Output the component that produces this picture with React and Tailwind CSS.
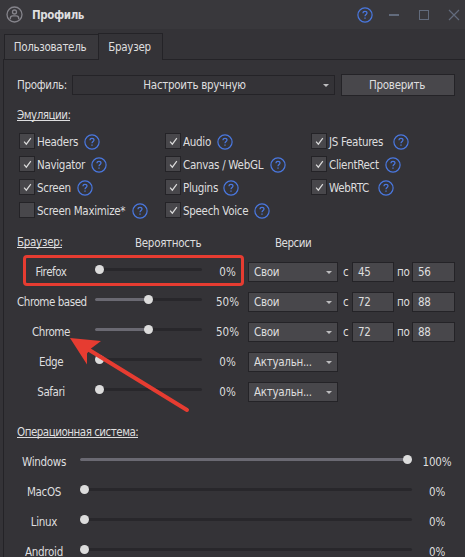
import { useState } from "react";
import clsx from "clsx";

const emulations = [
  [
    { name: "Headers", on: true, width: "w-[48px]" },
    { name: "Navigator", on: true, width: "w-[55px]" },
    { name: "Screen", on: true, width: "w-[41px]" },
    { name: "Screen Maximize*", on: false, width: "w-[96px]" },
  ],
  [
    { name: "Audio", on: true, width: "w-[35px]" },
    { name: "Canvas / WebGL", on: true, width: "w-[88px]" },
    { name: "Plugins", on: true, width: "w-[41px]" },
    { name: "Speech Voice", on: true, width: "w-[72px]" },
  ],
  [
    { name: "JS Features", on: true, width: "w-[65px]" },
    { name: "ClientRect", on: true, width: "w-[57px]" },
    { name: "WebRTC", on: true, width: "w-[50px]" },
  ],
];

const browsers = [
  { name: "Firefox", value: 0, mode: "Свои", from: 45, to: 56 },
  { name: "Chrome based", value: 50, mode: "Свои", from: 72, to: 88 },
  { name: "Chrome", value: 50, mode: "Свои", from: 72, to: 88 },
  { name: "Edge", value: 0, mode: "Актуальн..." },
  { name: "Safari", value: 0, mode: "Актуальн..." },
];

const systems = [
  { name: "Windows", value: 100 },
  { name: "MacOS", value: 0 },
  { name: "Linux", value: 0 },
  { name: "Android", value: 0 },
];

function HelpIcon() {
  return (
    <svg className="size-4 shrink-0" viewBox="0 0 16 16" fill="none" stroke="#4a78e0">
      <circle cx="8" cy="8" r="7.1" strokeWidth="1.2" />
      <path d="M6 6.2C6 4.9 6.8 4.3 8 4.3s2 .7 2 1.7c0 1.400-2 1.500-2 3.200" strokeWidth="1.200" />
      <path d="M8 10.500v1.300" strokeWidth="1.300" />
    </svg>
  );
}

function Caret() {
  return (
    <svg className="w-[6px] h-[3px] shrink-0" viewBox="0 0 6 3">
      <path d="M0 0h6L3 3z" fill="#bdbdbf" />
    </svg>
  );
}

function Check({ item }) {
  const [on, setOn] = useState(item.on);

  return (
    <div className="flex h-[23px] items-start">
      <button
        onClick={() => setOn(!on)}
        className="size-4 shrink-0 border border-[#242327] bg-[#48474b] flex items-center justify-center"
      >
        {on && (
          <svg className="w-[9px] h-[9px]" viewBox="0 0 10 10" fill="none" stroke="#dcdcdc" strokeWidth="1.300">
            <path d="M1.200 5.200L3.700 8 8.700 1.200" />
          </svg>
        )}
      </button>
      <span className={clsx("ml-[2px] mt-px h-4 leading-4", item.width)}>{item.name}</span>
      <span className="mt-px -ml-[1px]">
        <HelpIcon />
      </span>
    </div>
  );
}

function Slider({ value, className }) {
  return (
    <div className={clsx("relative h-[3px] shrink-0 rounded-full bg-[#28272b]", className)}>
      <div className="h-full rounded-full bg-[#6a6972]" style={{ width: `${value}%` }} />
      <div className="absolute inset-y-0 left-0 right-[9px]">
        <div className="absolute -top-[3px] size-[9px] rounded-full bg-[#dcdcdc]" style={{ left: `${value}%` }} />
      </div>
    </div>
  );
}

function Field({ children, className }) {
  return (
    <div className={clsx("h-5 shrink-0 flex items-center border border-[#242327] bg-[#48474b] pl-[5px]", className)}>
      {children}
    </div>
  );
}

function TitleBar() {
  return (
    <div className="h-[29px] shrink-0 flex items-center bg-[#39383c] pl-[6px]">
      <svg className="size-[17px]" viewBox="0 0 17 17" fill="none" stroke="#85848b" strokeWidth="1.300">
        <circle cx="8.500" cy="8.500" r="7.500" />
        <circle cx="8.500" cy="6" r="2" />
        <path d="M4.300 13.200v-.7c0-1.600 1-2.600 2.400-2.600h3.600c1.400 0 2.400 1 2.400 2.600v.7" />
      </svg>
      <h1 className="ml-[9px] font-bold tracking-[-0.4px]">Профиль</h1>
      <div className="ml-auto flex items-center text-[#626b7c]">
        <HelpIcon />
        <span className="ml-[16px] w-[10px] h-[2px] bg-[#626b7c]" />
        <span className="ml-5 size-[10px] border border-[#626b7c]" />
        <svg className="ml-[19px] mr-[5px] size-[12px]" viewBox="0 0 12 12" stroke="#626b7c" strokeWidth="1.200">
          <path d="M1 1l10 10M11 1L1 11" />
        </svg>
      </div>
    </div>
  );
}

function App() {
  return (
    <div className="relative w-[465px] h-[557px] overflow-hidden flex flex-col bg-[#343337] text-[11.5px] leading-4 text-[#dededf] whitespace-nowrap font-['DejaVu_Sans_Condensed','DejaVu_Sans',sans-serif] [font-stretch:condensed] tracking-[-0.3px]">
      <TitleBar />

      <div className="h-[30px] shrink-0 flex items-end pl-1">
        <div className="w-[94px] h-[25px] border border-r-0 border-b-0 border-[#242327] bg-[#39383c] flex items-center justify-center pr-[3px]">
          Пользователь
        </div>
        <div className="relative z-10 -mb-px w-[65px] h-[27px] border border-b-0 border-[#242327] bg-[#343337] flex items-center justify-center pr-[2px]">
          Браузер
        </div>
      </div>

      <div className="ml-[3px] flex-1 flex flex-col border-l border-t border-[#242327] pl-[13px]">
        <div className="mt-[14px] h-[22px] shrink-0 flex items-center">
          <span className="w-[55px]">Профиль:</span>
          <div className="w-[263px] h-5 border border-[#242327] flex items-center pr-[5px]">
            <span className="flex-1 text-center pr-[7px]">Настроить вручную</span>
            <Caret />
          </div>
          <button className="ml-[6px] w-[114px] h-[22px] border border-[#242327] bg-[#48474b] pr-[2px]">Проверить</button>
        </div>

        <h2 className="mt-[12px] h-[13px] leading-[14px] w-[53px] border-b border-[#dededf] tracking-[-0.5px]">
          Эмуляции:
        </h2>

        <div className="mt-[12px] ml-[2px] h-[92px] shrink-0 flex">
          {emulations.map((column, key) => (
            <div key={key} className="w-[146px]">
              {column.map((item) => (
                <Check key={item.name} item={item} />
              ))}
            </div>
          ))}
        </div>

        <div className="mt-[10px] h-[13px] shrink-0 flex leading-[14px]">
          <h2 className="w-[45px] h-[13px] border-b border-[#dededf]">Браузер:</h2>
          <span className="ml-[73px] w-[140px] pt-px">Вероятность</span>
          <span className="pt-px tracking-[-0.5px]">Версии</span>
        </div>

        <div className="mt-[14px] shrink-0 flex flex-col gap-[10px]">
          {browsers.map((item) => (
            <div key={item.name} className="h-5 flex items-center">
              <span className="w-[70px] pr-[2px] text-center tracking-[-0.45px]">{item.name}</span>
              <Slider value={item.value} className="ml-[8px] w-[107px] -mt-[5px]" />
              <span className="w-[46px] pl-[5px] text-center tracking-normal">{item.value}%</span>
              <Field className="w-[90px] justify-between pr-[5px]">
                {item.mode}
                <Caret />
              </Field>
              {item.from && (
                <>
                  <span className="w-[14px] pl-[5px]">с</span>
                  <Field className="w-[42px]">{item.from}</Field>
                  <span className="w-[18px] pl-[3px]">по</span>
                  <Field className="w-[43px]">{item.to}</Field>
                </>
              )}
            </div>
          ))}
        </div>

        <h2 className="mt-[23px] h-[13px] shrink-0 leading-[14px] w-[121px] border-b border-[#dededf] tracking-[-0.5px]">
          Операционная система:
        </h2>

        <div className="mt-[14px] shrink-0 flex flex-col gap-[10px] leading-[10px]">
          {systems.map((item) => (
            <div key={item.name} className="h-5 flex items-center">
              <span className="w-[54px] text-center">{item.name}</span>
              <Slider value={item.value} className="ml-[9px] w-[332px] -mt-[5px]" />
              <span className="w-[50px] text-center tracking-[-0.1px]">{item.value}%</span>
            </div>
          ))}
        </div>
      </div>

      <div className="absolute left-[23px] top-[255px] w-[221px] h-[31px] rounded-[4px] border-3 border-[#e63c31]" />
      <svg className="absolute left-0 top-0 w-[465px] h-[557px] pointer-events-none" viewBox="0 0 465 557">
        <path d="M187 410L86 348" stroke="#e63c31" strokeWidth="4" strokeLinecap="round" />
        <path d="M70 338L101 341L91 348.500L87 353.500L87 364.500z" fill="#e63c31" />
      </svg>
    </div>
  );
}

export default App;
